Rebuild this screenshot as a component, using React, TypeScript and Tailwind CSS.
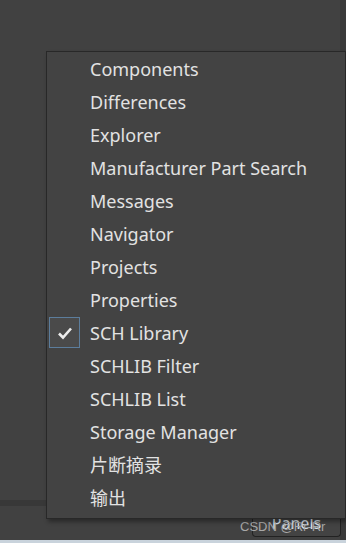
import React from "react";

const items = [
  "Components",
  "Differences",
  "Explorer",
  "Manufacturer Part Search",
  "Messages",
  "Navigator",
  "Projects",
  "Properties",
  "SCH Library",
  "SCHLIB Filter",
  "SCHLIB List",
  "Storage Manager",
  "片断摘录",
  "输出",
];

const font = { fontFamily: '"Noto Sans", "Noto Sans CJK SC", sans-serif' };

const App = () => {
  return (
    <div className="relative w-[346px] h-[543px] overflow-hidden bg-[#414141]" style={font}>
      {/* base window */}
      <div className="flex flex-col h-full">
        <div className="flex flex-1">
          <div className="flex-1 flex flex-col">
            <div className="flex-1" />
            <div className="h-[6px] bg-[#383838] mb-[34px]" />
          </div>
          <div className="w-[6px] bg-[#3a3a3a]" />
        </div>
        <div className="h-[3px] bg-[#c9d3dc]" />
      </div>

      {/* status bar button */}
      <div className="absolute left-[252px] top-[516px] w-[89px] h-[21px] border border-[#222] border-t-0 rounded-b-[4px] bg-[#434343] flex justify-center">
        <span className="text-[16px] leading-[16px] -mt-[1px] text-[#dbe4ee]">Panels</span>
      </div>
      <div className="absolute left-[240px] top-[519px] text-[13px] leading-[16px] text-[#a8a8a8]" style={{ fontFamily: '"Liberation Sans", sans-serif' }}>
        CSDN @Rr-Rr
      </div>

      {/* dropdown menu */}
      <div className="absolute left-[46px] top-[51px] w-[300px] border border-[#282828] bg-[#434343] pb-[4px] shadow-[2px_3px_4px_rgba(0,0,0,0.35)]">
        {items.map((item) => {
          const checked = item === "SCH Library";
          return (
            <div key={item} className="flex items-center h-[33px]">
              <div className="w-[43px] pl-[2px] flex items-center">
                {checked && (
                  <div className="w-[31px] h-[31px] border border-[#5c7d9c] bg-[#4a4a4a] flex items-center justify-center">
                    <svg width="16" height="14" viewBox="0 0 16 14">
                      <path d="M2 7.5 L6 11.5 L14 2.5" fill="none" stroke="#ececec" strokeWidth="2.6" />
                    </svg>
                  </div>
                )}
              </div>
              <span className="text-[18px] text-[#e2e2e2] leading-none">{item}</span>
            </div>
          );
        })}
      </div>
    </div>
  );
};

export default App;
